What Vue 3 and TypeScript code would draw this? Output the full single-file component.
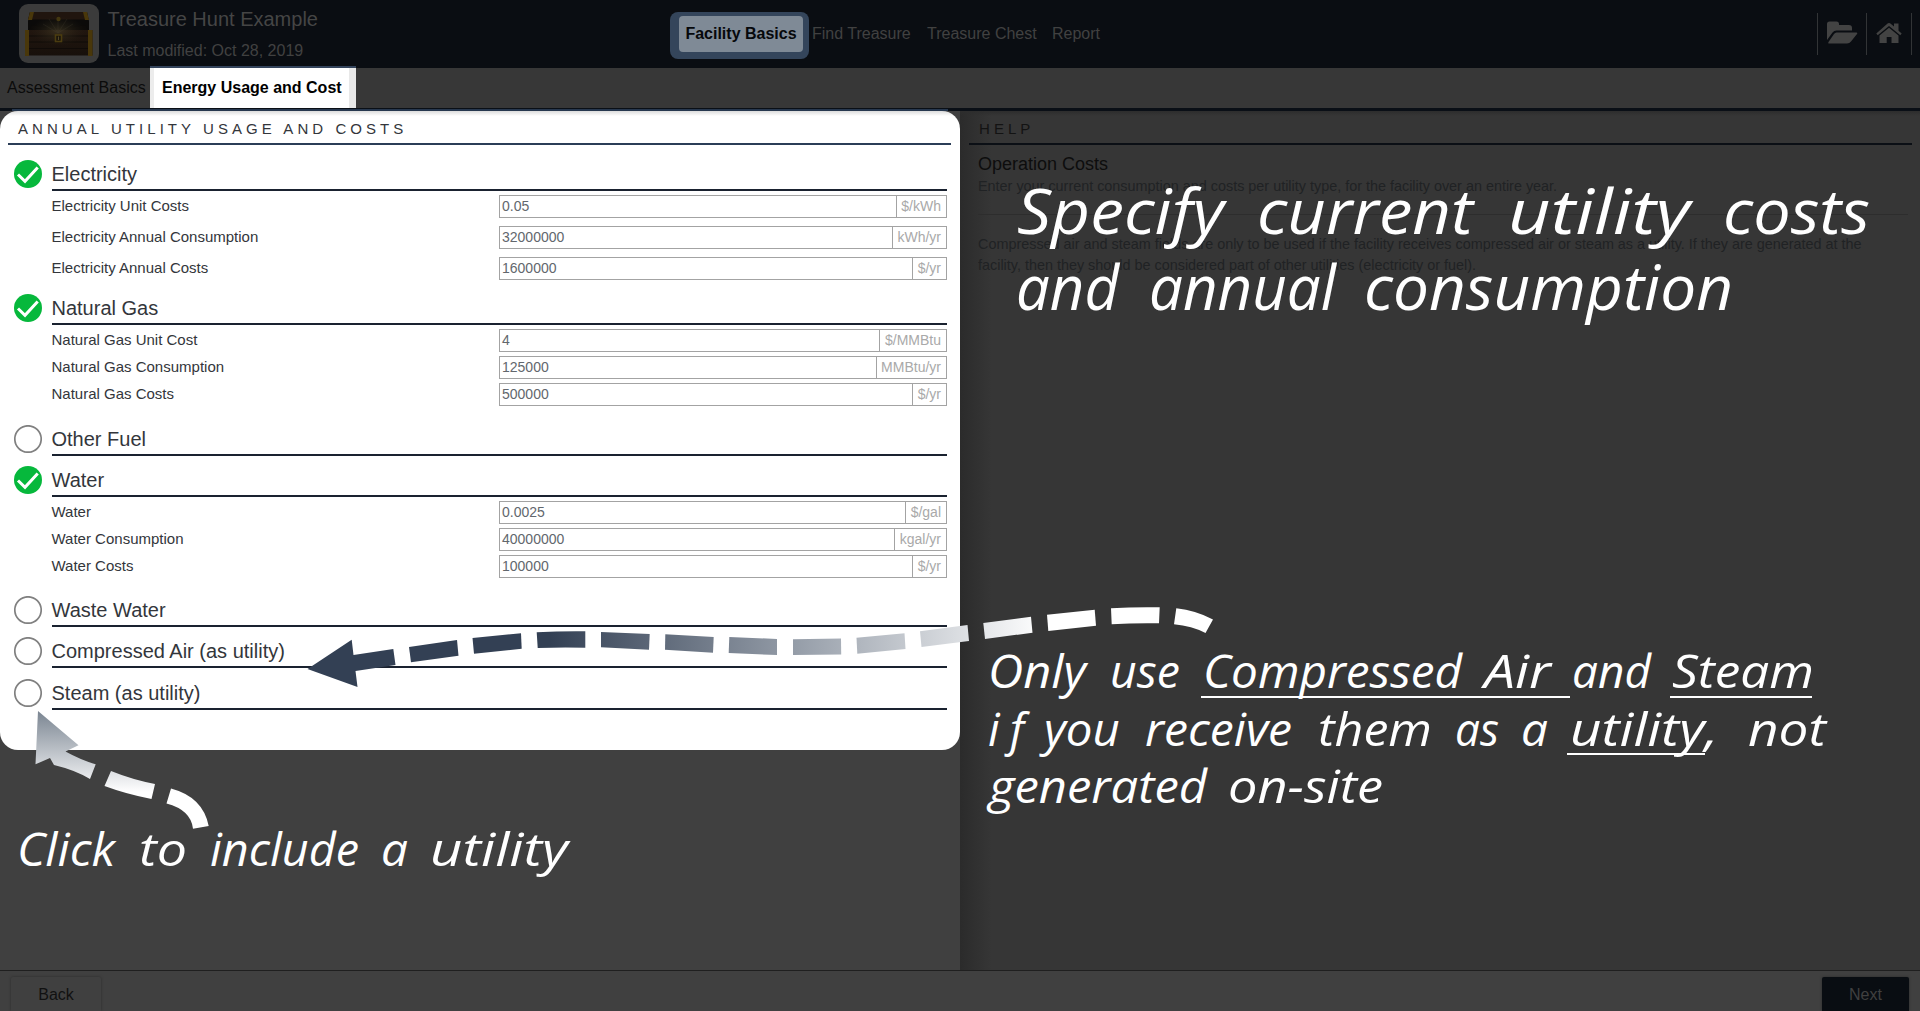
<script setup lang="ts">
interface Field { label: string; value: string; unit: string }
interface Utility { name: string; on: boolean; roomy?: boolean; fields: Field[] }
interface Word { t: string; x: number; w: number; y: number; s: number }

const utilities: Utility[] = [
  { name: 'Electricity', on: true, roomy: true, fields: [
    { label: 'Electricity Unit Costs', value: '0.05', unit: '$/kWh' },
    { label: 'Electricity Annual Consumption', value: '32000000', unit: 'kWh/yr' },
    { label: 'Electricity Annual Costs', value: '1600000', unit: '$/yr' } ] },
  { name: 'Natural Gas', on: true, fields: [
    { label: 'Natural Gas Unit Cost', value: '4', unit: '$/MMBtu' },
    { label: 'Natural Gas Consumption', value: '125000', unit: 'MMBtu/yr' },
    { label: 'Natural Gas Costs', value: '500000', unit: '$/yr' } ] },
  { name: 'Other Fuel', on: false, fields: [] },
  { name: 'Water', on: true, fields: [
    { label: 'Water', value: '0.0025', unit: '$/gal' },
    { label: 'Water Consumption', value: '40000000', unit: 'kgal/yr' },
    { label: 'Water Costs', value: '100000', unit: '$/yr' } ] },
  { name: 'Waste Water', on: false, fields: [] },
  { name: 'Compressed Air (as utility)', on: false, fields: [] },
  { name: 'Steam (as utility)', on: false, fields: [] },
]

function line(y: number, s: number, parts: [string, number, number][]): Word[] {
  return parts.map(([t, from, to]) => ({ t, x: from, w: to - from, y, s }))
}

const words: Word[] = [
  ...line(234, 63, [['Specify', 1017, 1224], ['current', 1257, 1473], ['utility', 1508, 1690], ['costs', 1723, 1870]]),
  ...line(310, 63, [['and', 1016, 1119], ['annual', 1149, 1336], ['consumption', 1364, 1733]]),
  ...line(688, 46, [['Only', 988, 1086], ['use', 1110, 1180], ['Compressed', 1203, 1462], ['Air', 1484, 1551], ['and', 1572, 1651], ['Steam', 1672, 1814]]),
  ...line(745.5, 46, [['if', 988, 1024], ['you', 1044, 1120], ['receive', 1145, 1292], ['them', 1318, 1432], ['as', 1455, 1499], ['a', 1521, 1548], ['utility,', 1570, 1718], ['not', 1748, 1826]]),
  ...line(803, 46, [['generated', 989, 1207], ['on-site', 1228, 1383]]),
  ...line(866, 46, [['Click', 17, 115], ['to', 139, 187], ['include', 210, 359], ['a', 381, 408], ['utility', 430, 568]]),
]
</script>

<template>
  <div class="app">
    <header class="header">
      <div class="brand">
        <svg class="chest" width="80" height="59" viewBox="0 0 80 59">
          <defs>
            <linearGradient id="wood" x1="0" y1="0" x2="0" y2="1">
              <stop offset="0" stop-color="#21160f" /><stop offset="1" stop-color="#17100b" />
            </linearGradient>
            <radialGradient id="glow">
              <stop offset="0" stop-color="#4a4128" stop-opacity=".6" /><stop offset="1" stop-color="#2a2417" stop-opacity="0" />
            </radialGradient>
          </defs>
          <rect width="80" height="59" rx="9" fill="#3b3b3b" />
          <path d="M11 8H68L70 17V27H9V17Z" fill="#0b0a09" />
          <path d="M11 8H67L69 15.500H9Z" fill="#20150e" />
          <path d="M11 8H15L13 16H9ZM64 8H68L70 16H66Z" fill="#49370a" />
          <path d="M6 26H73.500V51.500H6Z" fill="url(#wood)" />
          <path d="M10 26H69L66 21Q39 28 13 21Z" fill="#0d0b09" />
          <path d="M10 32H69M10 38H69M10 44.500H69" stroke="#0e0a07" stroke-width=".8" />
          <ellipse cx="39" cy="27" rx="27" ry="15" fill="url(#glow)" />
          <path d="M39 29L24 20M39 29L30 15M39 29V13M39 29L48 15M39 29L54 20" stroke="#4a4536" stroke-width=".6" opacity=".4" />
          <path d="M6 26H10V52H6ZM69 26H73.500V52H69Z" fill="#49370a" />
          <circle cx="39.500" cy="15" r="2.200" fill="#43370f" />
          <rect x="36.500" y="31" width="6" height="6.500" fill="#17120a" stroke="#4b3c10" stroke-width="1.600" />
          <path d="M39.500 32.500V36" stroke="#514524" stroke-width="1.200" />
        </svg>
        <div class="titles">
          <div class="name">Treasure Hunt Example</div>
          <div class="modified">Last modified: Oct 28, 2019</div>
        </div>
      </div>
      <nav class="nav">
        <span class="halo"><b>Facility Basics</b></span>
        <span class="n1">Find Treasure</span>
        <span class="n2">Treasure Chest</span>
        <span>Report</span>
      </nav>
      <div class="tools">
        <span class="tool folder">
          <svg width="31" height="23" viewBox="0 0 31 23" fill="#434343">
            <path d="M0 19V3Q0 .5 2.500 .5H9.500Q12 .5 12 3V4H22Q25 4 25 7V9.500H9.500Q7 9.500 5.500 11.500Z" />
            <path d="M9.500 11.500H29.500Q31 11.500 30 13L24 20.500Q22.500 22.500 20 22.500H2Q.5 22.500 1.500 21L7 13Q8 11.500 9.500 11.500Z" />
          </svg>
        </span>
        <span class="tool home">
          <svg width="26" height="21" viewBox="0 0 26 21" fill="#434343">
            <path d="M13 0Q14 0 15 1L18 3.600V.5H22.500V7.700L25.700 10.500L24.300 12.300L13 3L1.700 12.300L.3 10.500L11 1Q12 0 13 0Z" />
            <path d="M13 4.700L22.500 12.500V20H15.500V14H10.700V20H3.500V12.500Z" />
          </svg>
        </span>
      </div>
    </header>

    <div class="tabs">
      <span class="tab">Assessment Basics</span>
      <span class="tab active">Energy Usage and Cost</span>
    </div>

    <main class="main">
      <section class="left">
        <div class="card">
          <h2 class="title">ANNUAL UTILITY USAGE AND COSTS</h2>
          <div v-for="u in utilities" :key="u.name" class="utility" :class="{ roomy: u.roomy }">
            <div class="head">
              <svg class="mark" width="28" height="28" viewBox="0 0 28 28">
                <template v-if="u.on">
                  <circle cx="14" cy="14" r="14" fill="#06b83c" />
                  <path d="M4 14.500L11 21.300L23.700 7.500" fill="none" stroke="#fff" stroke-width="3" />
                </template>
                <circle v-else cx="14" cy="14" r="13.200" fill="#fff" stroke="#808080" stroke-width="1.700" />
              </svg>
              <h3>{{ u.name }}</h3>
            </div>
            <div v-if="u.fields.length" class="fields">
              <div v-for="f in u.fields" :key="f.label" class="row">
                <label>{{ f.label }}</label>
                <div class="input">
                  <span class="value">{{ f.value }}</span>
                  <span class="unit">{{ f.unit }}</span>
                </div>
              </div>
            </div>
          </div>
        </div>
      </section>
      <aside class="help">
        <h2 class="title">HELP</h2>
        <div class="body">
          <h4>Operation Costs</h4>
          <p>Enter your current consumption and costs per utility type, for the facility over an entire year.</p>
          <hr>
          <p>Compressed air and steam fields are only to be used if the facility receives compressed air or steam as a utility. If they are generated at the<br>facility, then they should be considered part of other utilities (electricity or fuel).</p>
        </div>
      </aside>
    </main>

    <footer class="footer">
      <span class="btn back">Back</span>
      <span class="btn next">Next</span>
    </footer>

    <svg class="notes" width="1920" height="1011" viewBox="0 0 1920 1011">
      <defs>
        <linearGradient id="fadeX" gradientUnits="userSpaceOnUse" x1="550" y1="0" x2="1045" y2="0">
          <stop offset="0" stop-color="#334054" /><stop offset=".5" stop-color="#969ea9" /><stop offset="1" stop-color="#fff" />
        </linearGradient>
        <linearGradient id="fadeY" gradientUnits="userSpaceOnUse" x1="0" y1="712" x2="0" y2="792">
          <stop offset="0" stop-color="#7c8793" /><stop offset="1" stop-color="#fff" />
        </linearGradient>
      </defs>
      <g fill="url(#fadeX)">
        <path d="M307.500 669L351.700 639.700L353.500 655L393.300 649L395.500 665L355.500 671L357.500 687Z" />
        <path d="M409 647L457 640L458.500 655.700L411 662.300Z" />
        <path d="M472.500 638L521 633.300L521.700 648.700L474 653.700Z" />
        <path d="M536.700 632.300Q561 631 585.300 631.300V647.700Q561 647 537.700 648Z" />
        <path d="M601 632L649.700 634L649 649.700L601 647.300Z" />
        <path d="M665.300 634.300L713.700 637L713 652.700L665 649.700Z" />
        <path d="M729.300 637L777 639V655L728.700 653Z" />
        <path d="M793 639.200L841 638.500L841.200 654.500L793 655Z" />
        <path d="M856.500 637.700L904.500 633.300L905.500 649L857.300 653.700Z" />
        <path d="M920 631.300L967.500 625L969 641L921.500 647Z" />
        <path d="M983.300 623L1031 616.700L1032.500 632.700L985 639Z" />
        <path d="M1047 614.700L1094.700 609.700L1096 625.700L1048.300 631Z" />
        <path d="M1111 608.300Q1135 606.800 1159.700 607.300L1159 623.300Q1135 622.800 1111.700 624.300Z" />
        <path d="M1176.300 608.300Q1196 610.500 1213 619.500L1205.500 633Q1192 626 1174 624.300Z" />
      </g>
      <g fill="url(#fadeY)">
        <path d="M38 711L78.500 745.300L65.500 751.500Q81 760 95.700 764.300L90 779Q75 770 54 765L50 758L35.500 764.300Z" />
        <path d="M111 771Q132 779.500 155 784L151.500 799Q126 794 104.500 786Z" />
        <path d="M171 788.500Q203 797 208.700 826L193 828.700Q191 810 166.500 803.500Z" />
      </g>
      <path d="M1201 697H1570M1670 697H1812M1567 754H1705" stroke="#fff" stroke-width="2" />
      <g class="ink">
        <text v-for="(w, i) in words" :key="i" :x="w.x" :y="w.y" :font-size="w.s" :textLength="w.w" :lengthAdjust="w.t === 'if' ? 'spacing' : 'spacingAndGlyphs'">{{ w.t }}</text>
      </g>
    </svg>
  </div>
</template>

<style>
body { margin: 0; background: #404040; }
</style>

<style scoped>
.app { position: relative; width: 1920px; height: 1011px; overflow: hidden; display: flex; flex-direction: column; background: #404040; font-family: "Liberation Sans", Arial, sans-serif; font-size: 16px; color: #131313; box-sizing: border-box; }
.app * { box-sizing: border-box; }
h2, h3, h4, p { margin: 0; font-weight: 400; }

.header { height: 68px; flex: none; display: grid; grid-template-columns: 670px auto 1fr; background: #0a0d12; color: #414141; }
.brand { display: flex; padding: 4px 0 0 19px; }
.titles { margin-left: 8.500px; }
.name { font-size: 20px; line-height: 24px; margin-top: 3px; color: #454545; }
.modified { line-height: 20px; margin-top: 10px; }
.nav { display: flex; align-items: flex-start; line-height: 20px; padding-top: 12px; white-space: nowrap; }
.nav > span { margin-top: 12px; }
.nav > .halo { display: flex; width: 139px; height: 47px; margin: 0 3px 0 0; padding: 4px 6px 7px 9px; background: #34455b; border-radius: 8px; }
.halo b { flex: 1; border-radius: 4px; background: #7f8a96; color: #06080b; text-align: center; line-height: 36px; }
.n1 { width: 115px; }
.n2 { width: 125px; }
.tools { display: flex; justify-content: flex-end; padding: 13px 8px 0 0; }
.tool { height: 42px; border-left: 1px solid #323436; }
.folder { width: 49px; padding: 8px 0 0 9px; }
.home { width: 46px; border-right: 1px solid #323436; padding: 10px 0 0 9px; }
.tool svg { display: block; }

.tabs { height: 43px; flex: none; display: flex; background: #373737; border-bottom: 3px solid #0a0f16; line-height: 40px; color: #0b0b0b; }
.tab { width: 150px; padding-left: 7px; white-space: nowrap; }
.tab.active { width: 206px; height: 42px; margin-top: -2px; padding: 0 0 0 12px; border-top: 2px solid #34445c; box-shadow: inset 4px 0 #ececec, inset -7px 0 #e8e8e8; background: #fff; color: #000; font-weight: 700; line-height: 39px; }

.main { flex: 1; display: flex; min-height: 0; }
.left { width: 960px; }
.card { position: relative; height: 639px; background: linear-gradient(#dcdcdc, #fff 5px); border-radius: 18px; padding: 0 13px 0 8px; color: #33363b; }
.card::before { content: ""; position: absolute; left: 12px; right: 12px; top: -2px; height: 2px; background: #27384f; }
.title { height: 34px; font-size: 15px; line-height: 36px; letter-spacing: 4.060px; padding-left: 10px; border-bottom: 2px solid #2b3d57; white-space: nowrap; }
.card .title { margin-right: -4px; margin-bottom: 9px; }
.utility { padding-left: 6px; }
.head { display: flex; height: 41.200px; padding-top: 6px; }
.mark { flex: none; margin-right: 9.500px; }
.head h3 { flex: 1; height: 31px; font-size: 20px; line-height: 28px; border-bottom: 2px solid #1a2230; }
.fields { height: 89.200px; padding-left: 37.500px; }
.roomy .fields { height: 93px; }
.row { display: flex; height: 27px; font-size: 15px; line-height: 22px; }
.roomy .row { height: 31px; }
.row label { width: 447.500px; }
.input { flex: 1; height: 23px; display: flex; border: 1px solid #a3a3a3; font-size: 14px; line-height: 21px; }
.value { flex: 1; padding-left: 2px; color: #62676d; }
.unit { border-left: 1px solid #a3a3a3; padding: 0 5px 0 4.500px; color: #a9a9a9; }

.help { flex: 1; background: linear-gradient(#2d2d2d, rgba(54, 54, 54, 0) 5px), linear-gradient(90deg, #2b2b2b, #363636 32px); padding: 0 8px 0 9px; }
.help .title { border-color: #0b0f15; }
.body { padding: 8px 4px 0 9px; }
.body h4 { font-size: 18px; line-height: 22px; color: #0d0d0d; }
.body p { font-size: 14.400px; line-height: 21px; color: #202224; white-space: nowrap; margin-top: 1px; }
.body hr { margin: 17px 0 19px; border: 0; border-top: 1px solid #2d2d2d; }

.footer { height: 41px; flex: none; display: flex; justify-content: space-between; border-top: 1px solid #1f1f1f; padding: 6px 11px 0; background: #404040; }
.btn { height: 34px; line-height: 35px; text-align: center; border-radius: 2px 2px 0 0; box-shadow: 0 0 3px rgba(0, 0, 0, .35); }
.back { width: 90px; color: #111; }
.next { width: 87px; background: #090d12; color: #404040; }

.notes { position: absolute; left: 0; top: 0; }
.ink { fill: #fff; font-family: "Open Sans", sans-serif; font-style: italic; font-weight: 500; }
</style>
